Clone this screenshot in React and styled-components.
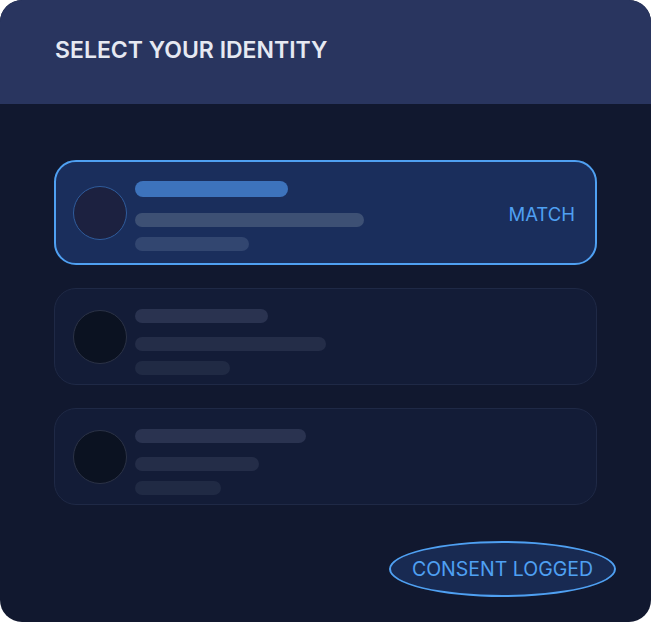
import styled, { createGlobalStyle } from "styled-components";

const GlobalStyle = createGlobalStyle`
  html, body {
    margin: 0;
    padding: 0;
    background: #ffffff;
  }
  body {
    font-family: Inter, "Noto Sans", "Liberation Sans", sans-serif;
  }
`;

const identities = [
  { selected: true, height: 105, bars: [153, 229, 114] },
  { selected: false, height: 97, bars: [133, 191, 95] },
  { selected: false, height: 97, bars: [171, 124, 86] },
];

function IdentityRow({ selected, height, bars }) {
  return (
    <Row $selected={selected} $height={height}>
      <Avatar $selected={selected} />
      <Bars $selected={selected}>
        {bars.map((w, i) => (
          <Bar key={i} $selected={selected} $index={i} style={{ width: w }} />
        ))}
      </Bars>
      {selected && <Match>MATCH</Match>}
    </Row>
  );
}

export default function App() {
  return (
    <>
      <GlobalStyle />
      <Card>
        <Header>
          <Title>SELECT YOUR IDENTITY</Title>
        </Header>
        <Body>
          <List>
            {identities.map((item, i) => (
              <IdentityRow key={i} {...item} />
            ))}
          </List>
          <Footer>
            <Consent>CONSENT LOGGED</Consent>
          </Footer>
        </Body>
      </Card>
    </>
  );
}

const Card = styled.div`
  width: 651px;
  height: 622px;
  border-radius: 22px;
  overflow: hidden;
  background: #11182f;
  display: flex;
  flex-direction: column;
`;

const Header = styled.div`
  height: 104px;
  background: #29355f;
  display: flex;
  align-items: center;
  padding-left: 55px;
  box-sizing: border-box;
`;

const Title = styled.h1`
  margin: 0;
  margin-top: -4px;
  font-size: 23px;
  font-weight: 600;
  letter-spacing: 0;
  color: #e6e9f2;
`;

const Body = styled.div`
  flex: 1;
  padding: 56px 54px 0 54px;
  display: flex;
  flex-direction: column;
`;

const List = styled.div`
  display: flex;
  flex-direction: column;
  gap: 23px;
`;

const Row = styled.div`
  box-sizing: border-box;
  height: ${(p) => p.$height}px;
  display: flex;
  align-items: center;
  border-radius: 22px;
  padding: 0 20px 0 ${(p) => (p.$selected ? 17 : 18)}px;
  background: ${(p) => (p.$selected ? "#1a2e5c" : "#131c37")};
  border: ${(p) => (p.$selected ? "2px solid #4fa0f2" : "1px solid #1f2946")};
`;

const Avatar = styled.div`
  flex: none;
  width: 52px;
  height: 52px;
  border-radius: 50%;
  background: ${(p) => (p.$selected ? "#1c2140" : "#0b1221")};
  border: 1px solid ${(p) => (p.$selected ? "#2f5c9c" : "#2b3246")};
`;

const Bars = styled.div`
  align-self: flex-start;
  margin-top: ${(p) => (p.$selected ? 19 : 20)}px;
  margin-left: 8px;
  display: flex;
  flex-direction: column;
`;

const Bar = styled.div`
  height: ${(p) => (p.$selected && p.$index === 0 ? 16 : 14)}px;
  border-radius: 8px;
  margin-top: ${(p) => (p.$index === 0 ? 0 : p.$index === 1 ? (p.$selected ? 16 : 14) : 10)}px;
  background: ${(p) =>
    p.$selected
      ? ["#3d73bc", "#3d5074", "#324670"][p.$index]
      : ["#2a3350", "#242d48", "#202a44"][p.$index]};
`;

const Match = styled.span`
  margin-left: auto;
  padding-top: 3px;
  font-size: 18.5px;
  font-weight: 400;
  color: #4fa0f2;
`;

const Footer = styled.div`
  display: flex;
  justify-content: flex-end;
  margin-top: 36px;
  margin-right: -19px;
`;

const Consent = styled.div`
  box-sizing: border-box;
  width: 227px;
  height: 56px;
  border-radius: 50%;
  border: 2px solid #4fa0f2;
  background: #182a52;
  color: #4fa0f2;
  font-size: 19.5px;
  display: flex;
  align-items: center;
  justify-content: center;
`;
